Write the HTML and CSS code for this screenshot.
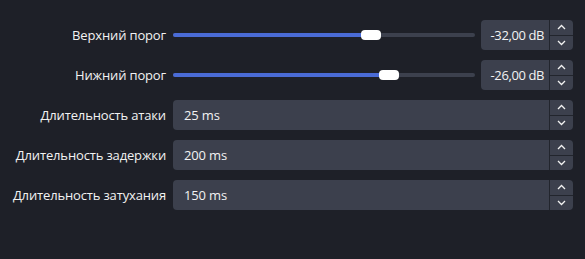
FILE: index.html
```html
<!DOCTYPE html>
<html lang="ru">
  <head>
    <meta charset="UTF-8" />
    <meta name="viewport" content="width=device-width, initial-scale=1.0" />
    <title>Экспандер</title>
    <link rel="stylesheet" href="styles.css">
  </head>
  <body>
    <div class="props">
      <label class="prop-label">Верхний порог</label>
      <div class="prop-slider">
        <div class="slider">
          <div class="slider-fill" style="width: 198px"></div>
          <div class="slider-thumb" style="left: 188px"></div>
        </div>
        <div class="spin spin-db">
          <span class="spin-value">-32,00 dB</span>
          <div class="spin-btns">
            <span class="spin-btn"><svg width="9" height="6" viewBox="0 0 9 6"><polyline points="1,5 4.5,1.5 8,5" /></svg></span>
            <span class="spin-btn"><svg width="9" height="6" viewBox="0 0 9 6"><polyline points="1,1 4.5,4.5 8,1" /></svg></span>
          </div>
        </div>
      </div>

      <label class="prop-label">Нижний порог</label>
      <div class="prop-slider">
        <div class="slider">
          <div class="slider-fill" style="width: 216px"></div>
          <div class="slider-thumb" style="left: 206px"></div>
        </div>
        <div class="spin spin-db">
          <span class="spin-value">-26,00 dB</span>
          <div class="spin-btns">
            <span class="spin-btn"><svg width="9" height="6" viewBox="0 0 9 6"><polyline points="1,5 4.5,1.5 8,5" /></svg></span>
            <span class="spin-btn"><svg width="9" height="6" viewBox="0 0 9 6"><polyline points="1,1 4.5,4.5 8,1" /></svg></span>
          </div>
        </div>
      </div>

      <label class="prop-label">Длительность атаки</label>
      <div class="spin">
        <span class="spin-value">25 ms</span>
        <div class="spin-btns">
          <span class="spin-btn"><svg width="9" height="6" viewBox="0 0 9 6"><polyline points="1,5 4.5,1.5 8,5" /></svg></span>
          <span class="spin-btn"><svg width="9" height="6" viewBox="0 0 9 6"><polyline points="1,1 4.5,4.5 8,1" /></svg></span>
        </div>
      </div>

      <label class="prop-label">Длительность задержки</label>
      <div class="spin">
        <span class="spin-value">200 ms</span>
        <div class="spin-btns">
          <span class="spin-btn"><svg width="9" height="6" viewBox="0 0 9 6"><polyline points="1,5 4.5,1.5 8,5" /></svg></span>
          <span class="spin-btn"><svg width="9" height="6" viewBox="0 0 9 6"><polyline points="1,1 4.5,4.5 8,1" /></svg></span>
        </div>
      </div>

      <label class="prop-label">Длительность затухания</label>
      <div class="spin">
        <span class="spin-value">150 ms</span>
        <div class="spin-btns">
          <span class="spin-btn"><svg width="9" height="6" viewBox="0 0 9 6"><polyline points="1,5 4.5,1.5 8,5" /></svg></span>
          <span class="spin-btn"><svg width="9" height="6" viewBox="0 0 9 6"><polyline points="1,1 4.5,4.5 8,1" /></svg></span>
        </div>
      </div>
    </div>
  </body>
</html>
```

FILE: styles.css
```css
* {
  margin: 0;
  padding: 0;
  box-sizing: border-box;
}

body {
  font-family: "Open Sans", "Noto Sans", sans-serif;
  font-size: 13px;
  letter-spacing: -0.15px;
  background-color: #1e2028;
  color: #f2f2f2;
  width: 585px;
  height: 259px;
  overflow: hidden;
}

.props {
  display: grid;
  grid-template-columns: 154px 400px;
  grid-auto-rows: 30px;
  column-gap: 7px;
  row-gap: 10px;
  padding: 20px 12px 0 12px;
}

.prop-label {
  display: flex;
  align-items: center;
  justify-content: flex-end;
  white-space: nowrap;
  padding-bottom: 1px;
}

.prop-slider {
  display: flex;
  align-items: center;
  gap: 6px;
}

.slider {
  position: relative;
  flex: 1;
  height: 4px;
  border-radius: 2px;
  background-color: #3c404d;
}

.slider-fill {
  height: 100%;
  border-radius: 2px;
  background-color: #4a6bd6;
}

.slider-thumb {
  position: absolute;
  top: -3px;
  width: 20px;
  height: 10px;
  border-radius: 4px;
  background-color: #ffffff;
}

.spin {
  display: flex;
  height: 30px;
  border-radius: 4px;
  background-color: #3c404d;
  overflow: hidden;
}

.spin-db {
  width: 92px;
  flex-shrink: 0;
}

.spin-value {
  flex: 1;
  display: flex;
  align-items: center;
  padding-left: 11px;
  padding-bottom: 1px;
}

.spin-db .spin-value {
  justify-content: flex-end;
  padding-left: 0;
  padding-right: 5px;
  letter-spacing: -0.4px;
}

.spin-btns {
  width: 24px;
  display: flex;
  flex-direction: column;
  border-left: 1px solid #22252d;
}

.spin-btn {
  flex: 1;
  display: flex;
  align-items: center;
  justify-content: center;
}

.spin-btn + .spin-btn {
  border-top: 1px solid #22252d;
}

.spin-btn svg polyline {
  fill: none;
  stroke: #f2f2f2;
  stroke-width: 1.3;
}
```
